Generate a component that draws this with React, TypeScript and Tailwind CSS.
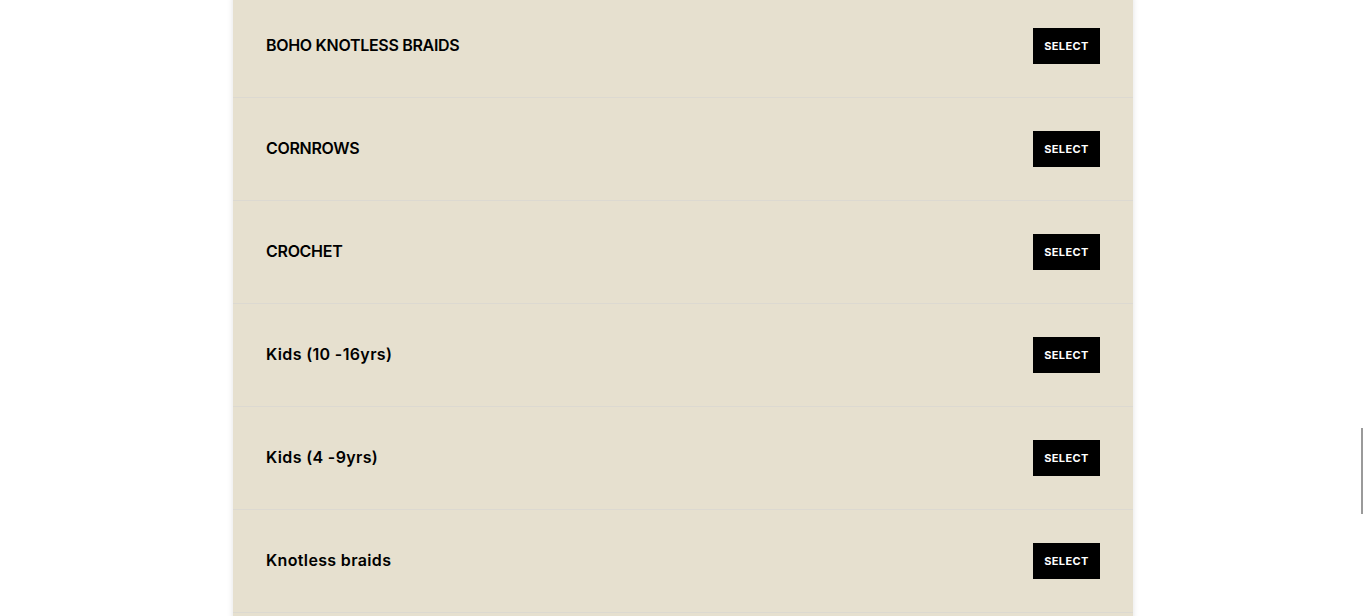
import React from "react";

const items = [
  { name: "BOHO KNOTLESS BRAIDS", upper: true },
  { name: "CORNROWS", upper: true },
  { name: "CROCHET", upper: true },
  { name: "Kids (10 -16yrs)", upper: false },
  { name: "Kids (4 -9yrs)", upper: false },
  { name: "Knotless braids", upper: false },
];

export default function App() {
  return (
    <div className="relative h-[616px] w-full overflow-hidden bg-white" style={{ fontFamily: "Inter, 'Noto Sans', sans-serif" }}>
      <div className="mx-auto -mt-[5px] w-[900px] bg-[#e6e0cf] shadow-[0_0_6px_rgba(0,0,0,0.12)]">
        {items.map((it) => (
          <div key={it.name} className="flex h-[103px] items-center justify-between border-b border-[#dcd9d1] px-[33px]">
            <span
              className={
                it.upper
                  ? "-mt-[2px] text-[16px] font-semibold tracking-[-0.3px] text-black"
                  : "-mt-[2px] text-[16px] font-semibold tracking-[0.35px] text-black"
              }
            >
              {it.name}
            </span>
            <button className="flex h-[36px] w-[67px] items-center justify-center bg-black text-[11px] font-bold tracking-[0.4px] text-white">
              SELECT
            </button>
          </div>
        ))}
        <div className="h-[20px]" />
      </div>
      <div className="absolute left-[1361px] top-[428px] h-[86px] w-[2px] bg-[#9a9a9a]" />
    </div>
  );
}
